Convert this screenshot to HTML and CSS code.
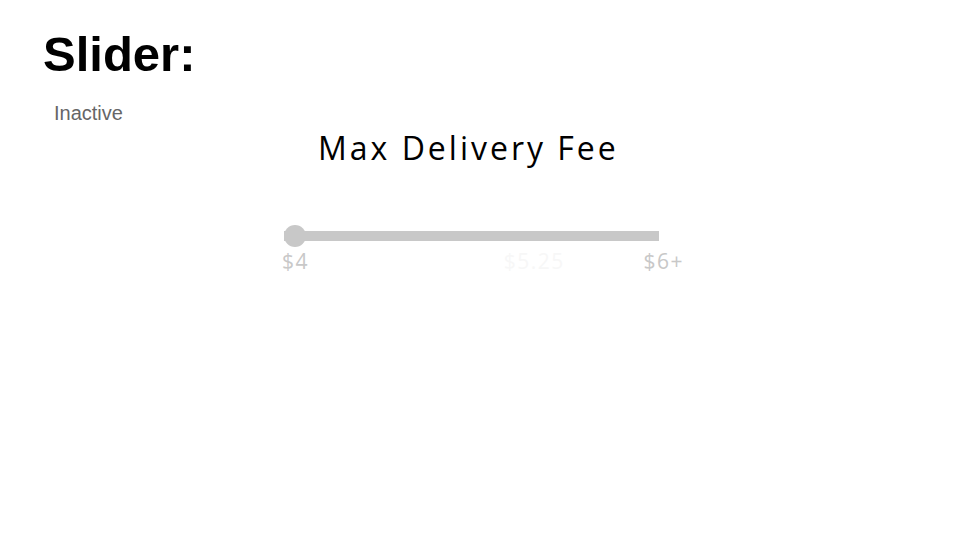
FILE: index.html
```html
<!DOCTYPE html>
<html>
<head>
<meta charset="utf-8">
<link rel="stylesheet" href="styles.css">
</head>
<body>
<main class="page">
  <h1 class="title">Slider:</h1>
  <div class="state">Inactive</div>
  <section class="slider-card">
    <h2 class="slider-heading">Max Delivery Fee</h2>
    <div class="slider">
      <div class="track"><span class="thumb"></span></div>
      <div class="labels">
        <span class="label">$4</span>
        <span class="label label-mid">$5.25</span>
        <span class="label">$6+</span>
      </div>
    </div>
  </section>
</main>
</body>
</html>
```
FILE: styles.css
```css
html, body {
  margin: 0;
  padding: 0;
  background: #ffffff;
}
.page {
  width: 960px;
  height: 540px;
  padding: 26px 0 0 43px;
  box-sizing: border-box;
  font-family: "Liberation Sans", Arial, sans-serif;
}
.title {
  margin: 0;
  font-size: 49px;
  font-weight: bold;
  line-height: 56px;
  color: #000;
}
.state {
  margin: 19px 0 0 11px;
  font-size: 20px;
  line-height: 24px;
  color: #666666;
}
.slider-card {
  display: flex;
  flex-direction: column;
  margin: 0 0 0 239px;
  width: 402px;
}
.slider-heading {
  margin: 3px 0 0 36px;
  font-family: "Open Sans", sans-serif;
  font-weight: normal;
  font-size: 32px;
  letter-spacing: 3px;
  line-height: 40px;
  color: #000;
  white-space: nowrap;
}
.slider {
  margin-top: 63px;
  display: flex;
  flex-direction: column;
}
.track {
  position: relative;
  width: 375px;
  height: 10px;
  margin-left: 2px;
  background: #c8c8c8;
}
.thumb {
  position: absolute;
  left: 0;
  top: -6px;
  width: 22px;
  height: 22px;
  border-radius: 50%;
  background: #c8c8c8;
}
.labels {
  display: flex;
  justify-content: space-between;
  margin-top: 7px;
  font-family: "Open Sans", sans-serif;
  font-size: 21px;
  line-height: 26px;
  letter-spacing: 1.5px;
  color: #c8c8c8;
}
.label-mid {
  color: #f7f7f7;
  margin-left: 116px;
}
```
